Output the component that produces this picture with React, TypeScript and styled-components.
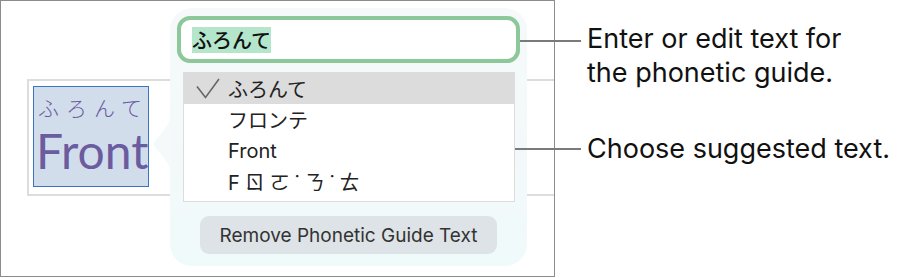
import styled, { createGlobalStyle } from 'styled-components';

const GlobalStyle = createGlobalStyle`
    html, body {
        margin: 0;
        padding: 0;
        background: #ffffff;
    }
    body {
        font-family: Inter, "Noto Sans CJK JP", sans-serif;
    }
`

const Page = styled.div`
    display: flex;
    align-items: flex-start;
    width: 905px;
    height: 278px;
`

const Frame = styled.div`
    position: relative;
    box-sizing: border-box;
    width: 555px;
    height: 277px;
    border: 1px solid #8c8c8c;
    overflow: hidden;
    flex-shrink: 0;
`

const TextBox = styled.div`
    box-sizing: border-box;
    margin: 78px 0 0 26px;
    width: 620px;
    height: 117px;
    border: 2px solid #dddddd;
    padding: 5px 0 0 4px;
`

const Selection = styled.div`
    box-sizing: border-box;
    width: 116px;
    height: 101px;
    background: #d2ddec;
    border: 1.5px solid #3b73c2;
    color: #6b5b9f;
    display: flex;
    flex-direction: column;
    align-items: flex-start;
    overflow: hidden;
`

const Ruby = styled.div`
    font-family: "Noto Sans CJK JP", sans-serif;
    font-weight: 300;
    font-size: 21px;
    letter-spacing: 7px;
    line-height: 30px;
    margin: 5px 0 0 4px;
    white-space: nowrap;
`

const BaseText = styled.div`
    font-family: Lato, "Liberation Sans", sans-serif;
    font-size: 48px;
    line-height: 52px;
    margin: 3px 0 0 2px;
    white-space: nowrap;
`

const Popover = styled.div`
    position: absolute;
    left: 169px;
    top: 7px;
    box-sizing: border-box;
    width: 357px;
    height: 258px;
    border-radius: 22px;
    background: linear-gradient(180deg, #f5f9fa 0%, #f3f9fa 60%, #effafb 100%);
    padding: 8px 7px 0;
    display: flex;
    flex-direction: column;
`

const Pointer = styled.svg`
    position: absolute;
    left: -17px;
    top: 106px;
`

const Field = styled.div`
    box-sizing: border-box;
    height: 47px;
    border: 4px solid #8dc89b;
    border-radius: 13px;
    background: #ffffff;
    display: flex;
    align-items: center;
    padding-left: 11px;
`

const Highlight = styled.span`
    font-family: "Noto Sans CJK JP", sans-serif;
    font-size: 20px;
    font-weight: 500;
    line-height: 26px;
    color: #111111;
    background: #b4e6cb;
`

const List = styled.div`
    box-sizing: border-box;
    margin: 9px 5px 0 6px;
    height: 130px;
    border: 1px solid #dddddd;
    background: #ffffff;
`

const Row = styled.div<{ $selected?: boolean; $spread?: number }>`
    display: flex;
    align-items: center;
    height: 31px;
    background: ${(p) => (p.$selected ? '#dcdcdc' : 'transparent')};
    color: #222222;
    font-family: Inter, "Noto Sans CJK JP", "Noto Sans CJK TC", sans-serif;
    font-size: 20px;
    letter-spacing: ${(p) => p.$spread ?? 0}px;
`

const CheckCell = styled.div`
    width: 44px;
    padding-left: 12px;
    box-sizing: border-box;
    display: flex;
    align-items: center;
`

const RemoveButton = styled.button`
    align-self: center;
    margin-top: 14px;
    width: 297px;
    height: 38px;
    border: none;
    border-radius: 9px;
    background: #dde3e6;
    color: #333333;
    font-family: Inter, sans-serif;
    font-size: 19px;
    padding: 0;
`

const Callouts = styled.div`
    display: flex;
    flex-direction: column;
    margin-left: 32px;
    padding-top: 22px;
`

const Callout = styled.div<{ $lead: number; $lineTop: number; $gap?: number }>`
    position: relative;
    margin-top: ${(p) => p.$gap ?? 0}px;
    font-family: Inter, sans-serif;
    font-size: 27px;
    line-height: 34px;
    color: #111111;
    white-space: nowrap;

    &::before {
        content: '';
        position: absolute;
        left: -${(p) => p.$lead + 6}px;
        top: ${(p) => p.$lineTop}px;
        width: ${(p) => p.$lead}px;
        height: 2px;
        background: #7a7a7a;
    }
`

function Check() {
    return (
        <svg width="24" height="21" viewBox="0 0 24 21">
            <polyline points="1,8.5 9.5,19.5 23,1" fill="none" stroke="#666666" strokeWidth="1.6" />
        </svg>
    );
}

const suggestions = [
    { text: 'ふろんて', spread: 0 },
    { text: 'フロンテ', spread: 0 },
    { text: 'Front', spread: 0 },
    { text: 'Fㄖㄛ˙ㄋ˙ㄊ', spread: 5 },
];

export default function App() {
    return (
        <Page>
            <GlobalStyle />
            <Frame>
                <TextBox>
                    <Selection>
                        <Ruby>ふろんて</Ruby>
                        <BaseText>Front</BaseText>
                    </Selection>
                </TextBox>
                <Popover>
                    <Pointer width="18" height="60" viewBox="0 0 18 60">
                        <path d="M18,0 C18,14 1,24 1,30 C1,36 18,46 18,60 Z" fill="#f4f9fa" />
                    </Pointer>
                    <Field>
                        <Highlight>ふろんて</Highlight>
                    </Field>
                    <List>
                        {suggestions.map((s, i) => (
                            <Row key={s.text} $selected={i === 0} $spread={s.spread}>
                                <CheckCell>{i === 0 && <Check />}</CheckCell>
                                {s.text}
                            </Row>
                        ))}
                    </List>
                    <RemoveButton>Remove Phonetic Guide Text</RemoveButton>
                </Popover>
            </Frame>
            <Callouts>
                <Callout $lead={61} $lineTop={18}>
                    Enter or edit text for
                    <br />
                    the phonetic guide.
                </Callout>
                <Callout $lead={66} $lineTop={16} $gap={42}>
                    Choose suggested text.
                </Callout>
            </Callouts>
        </Page>
    );
}
